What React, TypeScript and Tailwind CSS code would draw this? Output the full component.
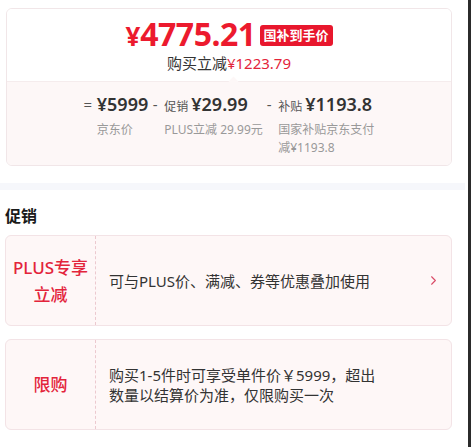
import React from 'react';
import { ChevronRight } from 'lucide-react';

const font = { fontFamily: '"Noto Sans", "Noto Sans CJK SC", sans-serif' };

interface PartProps {
  sign: string;
  label?: string;
  value: string;
  note: React.ReactNode;
  noteWidth: string;
}

const PricePart: React.FC<PartProps> = ({ sign, label, value, note, noteWidth }) => (
  <div className="flex items-start">
    <span className="text-[15px] leading-[26px] text-[#555] w-[12px] mr-[3px] text-center">{sign}</span>
    <div className="flex flex-col">
      <div className="flex items-baseline h-[26px]">
        {label && <span className="text-[12px] text-[#555] mr-[3px]">{label}</span>}
        <span className="text-[18px] font-semibold text-[#333] leading-[26px]">{value}</span>
      </div>
      <div className={`text-[12px] leading-[18px] text-[#999] mt-[4px] ${noteWidth}`}>{note}</div>
    </div>
  </div>
);

interface PromoProps {
  label: React.ReactNode;
  text: React.ReactNode;
  arrow?: boolean;
}

const PromoCard: React.FC<PromoProps> = ({ label, text, arrow }) => (
  <div className="flex h-[91px] w-[447px] rounded-[6px] border border-[#f3e3e6] bg-[#fef7f7]">
    <div className="w-[90px] flex items-center justify-center border-r border-dashed border-[#ecc9cf] text-center text-[17px] leading-[27px] font-medium text-[#e3243b]">
      {label}
    </div>
    <div className="flex-1 flex items-center pl-[13px] pr-[10px]">
      <div className="flex-1 text-[15px] leading-[20px] text-[#333]">{text}</div>
      {arrow && <ChevronRight size={15} strokeWidth={1.7} className="ml-auto text-[#d94a66]" />}
    </div>
  </div>
);

export default function App() {
  return (
    <div className="flex w-[471px] h-[447px] overflow-hidden bg-white" style={font}>
      <div className="w-[468px] flex flex-col pt-[8px]">
        <div className="ml-[6px] w-[446px] rounded-[6px] border border-[#f1e6e8] overflow-hidden">
          <div className="relative h-[72px] bg-white flex flex-col items-center pt-[9px]">
            <div className="flex items-center">
              <span className="text-[#ec1a2e] font-bold flex items-baseline leading-none">
                <span className="text-[26px]">¥</span>
                <span className="text-[32px] tracking-[-0.5px]">4775.21</span>
              </span>
              <span className="ml-[4px] mt-[3px] h-[21px] px-[4px] rounded-[3px] bg-[#e8172d] text-white text-[13px] font-bold leading-[21px]">
                国补到手价
              </span>
            </div>
            <div className="mt-[3px] text-[15px] leading-[20px] text-[#333]">
              购买立减<span className="text-[#e3243b]">¥1223.79</span>
            </div>
            <span className="absolute left-[223px] bottom-[-4px] w-[7px] h-[7px] rotate-45 bg-[#fdf7f7]" />
          </div>
          <div className="h-[84px] bg-[#fdf7f7] border-t border-[#f5eced] flex justify-center pt-[9px] pl-[2px]">
            <PricePart sign="=" value="¥5999" note="京东价" noteWidth="w-[50px]" />
            <div className="ml-[1px]">
              <PricePart sign="-" label="促销" value="¥29.99" note="PLUS立减 29.99元" noteWidth="w-[100px]" />
            </div>
            <div className="-ml-[1px]">
              <PricePart sign="-" label="补贴" value="¥1193.8" note={<>国家补贴京东支付<br />减¥1193.8</>} noteWidth="w-[100px]" />
            </div>
          </div>
        </div>

        <div className="mt-[17px] h-[7px] w-[465px] bg-[#f6f7fb]" />

        <div className="pl-[5px] pt-[15px]">
          <h3 className="text-[16px] leading-[22px] font-bold text-[#1a1a1a]">促销</h3>
          <div className="mt-[8px] flex flex-col gap-[13px]">
            <PromoCard label={<>PLUS专享<br />立减</>} text="可与PLUS价、满减、券等优惠叠加使用" arrow />
            <PromoCard label="限购" text={<>购买1-5件时可享受单件价￥5999，超出<br />数量以结算价为准，仅限购买一次</>} />
          </div>
        </div>
      </div>
      <div className="w-[3px] bg-[#2b2b2b]" />
    </div>
  );
}
